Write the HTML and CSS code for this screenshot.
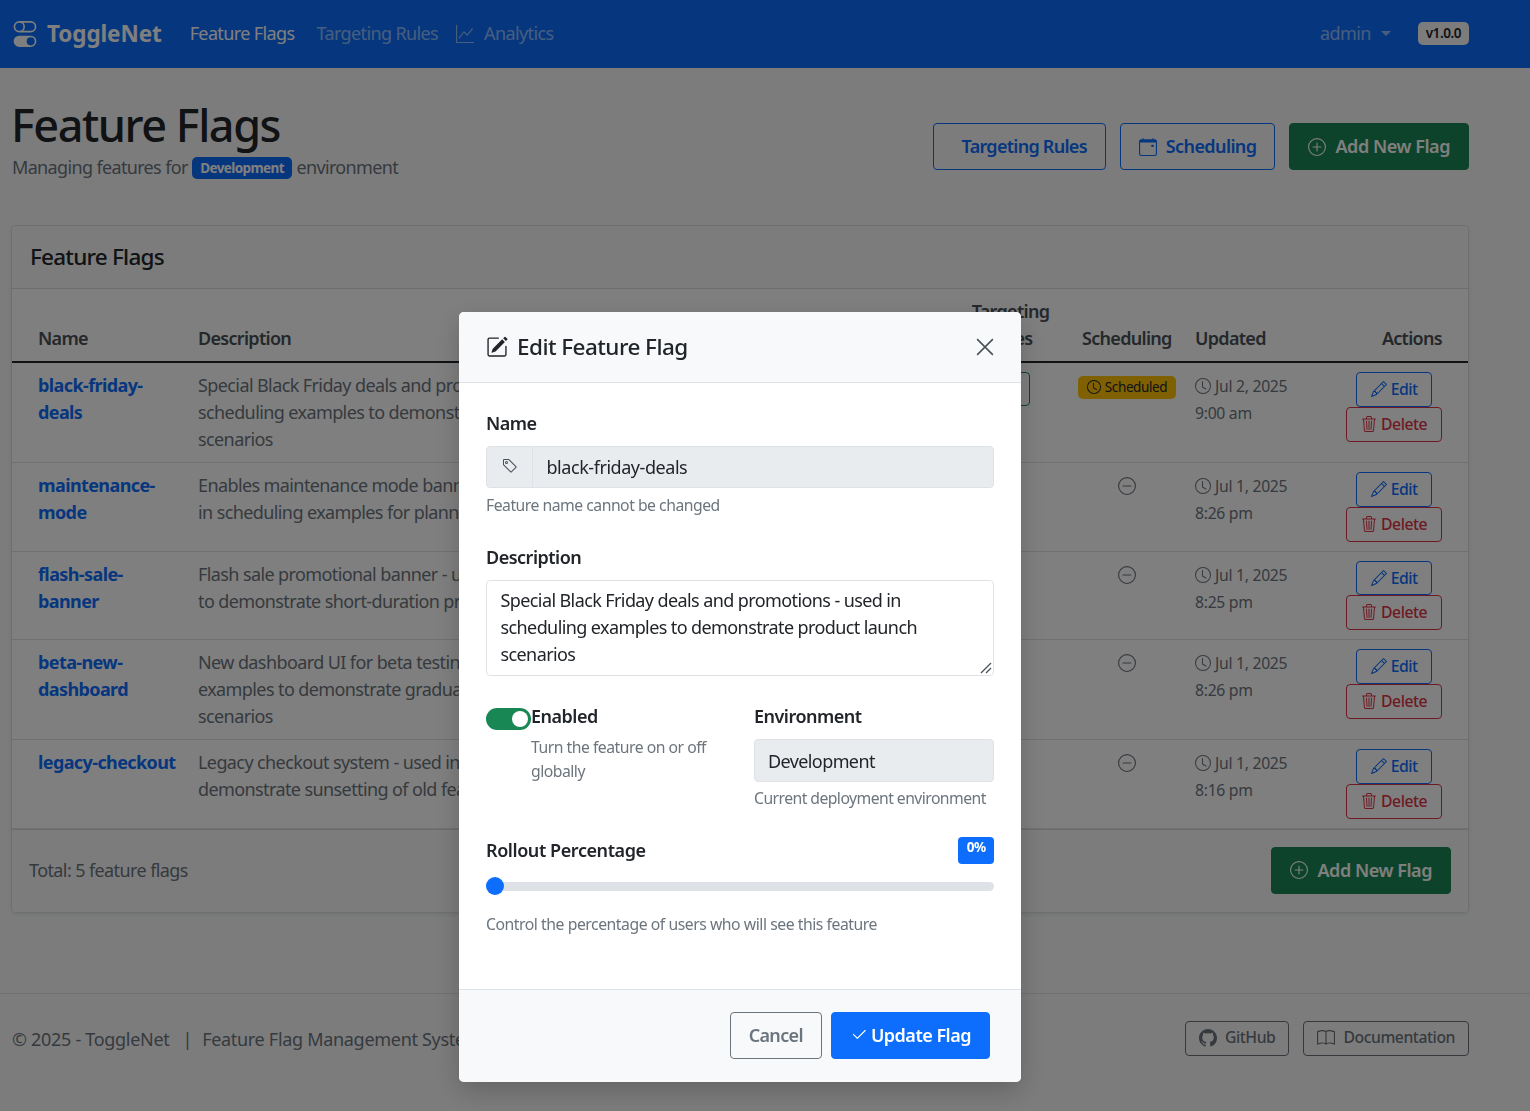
FILE: index.html
```html
<!DOCTYPE html>
<html lang="en">
<head>
<meta charset="utf-8">
<title>ToggleNet - Feature Flags</title>
<link rel="stylesheet" href="styles.css">
</head>
<body>
<svg class="sprite" xmlns="http://www.w3.org/2000/svg">
<symbol id="i-toggles" viewBox="0 0 16 16"><path d="M4.5 9a3.5 3.5 0 1 0 0 7h7a3.5 3.5 0 1 0 0-7h-7zm7 6a2.5 2.5 0 1 1 0-5 2.5 2.5 0 0 1 0 5zm-7-14a2.5 2.5 0 1 0 0 5 2.5 2.5 0 0 0 0-5zm2.45 0A3.49 3.49 0 0 1 8 3.5 3.49 3.49 0 0 1 6.95 6h4.55a2.5 2.5 0 0 0 0-5H6.95zM4.5 0h7a3.5 3.5 0 1 1 0 7h-7a3.5 3.5 0 1 1 0-7z"/></symbol>
<symbol id="i-graph" viewBox="0 0 16 16"><path d="M0 0h1v15h15v1H0V0Zm14.817 3.113a.5.5 0 0 1 .07.704l-4.5 5.5a.5.5 0 0 1-.74.037L7.06 6.767l-3.656 5.027a.5.5 0 0 1-.808-.588l4-5.5a.5.5 0 0 1 .758-.06l2.609 2.61 4.15-5.073a.5.5 0 0 1 .704-.07Z"/></symbol>
<symbol id="i-calendar" viewBox="0 0 16 16"><path d="M11 6.5a.5.5 0 0 1 .5-.5h1a.5.5 0 0 1 .5.5v1a.5.5 0 0 1-.5.5h-1a.5.5 0 0 1-.5-.5v-1z"/><path d="M3.5 0a.5.5 0 0 1 .5.5V1h8V.5a.5.5 0 0 1 1 0V1h1a2 2 0 0 1 2 2v11a2 2 0 0 1-2 2H2a2 2 0 0 1-2-2V3a2 2 0 0 1 2-2h1V.5a.5.5 0 0 1 .5-.5zM1 4v10a1 1 0 0 0 1 1h12a1 1 0 0 0 1-1V4H1z"/></symbol>
<symbol id="i-plus" viewBox="0 0 16 16"><path d="M8 15A7 7 0 1 1 8 1a7 7 0 0 1 0 14zm0 1A8 8 0 1 0 8 0a8 8 0 0 0 0 16z"/><path d="M8 4a.5.5 0 0 1 .5.5v3h3a.5.5 0 0 1 0 1h-3v3a.5.5 0 0 1-1 0v-3h-3a.5.5 0 0 1 0-1h3v-3A.5.5 0 0 1 8 4z"/></symbol>
<symbol id="i-clock" viewBox="0 0 16 16"><path d="M8 3.5a.5.5 0 0 0-1 0V9a.5.5 0 0 0 .252.434l3.5 2a.5.5 0 0 0 .496-.868L8 8.71V3.5z"/><path d="M8 16A8 8 0 1 0 8 0a8 8 0 0 0 0 16zm7-8A7 7 0 1 1 1 8a7 7 0 0 1 14 0z"/></symbol>
<symbol id="i-dash" viewBox="0 0 16 16"><path d="M8 15A7 7 0 1 1 8 1a7 7 0 0 1 0 14zm0 1A8 8 0 1 0 8 0a8 8 0 0 0 0 16z"/><path d="M4 8a.5.5 0 0 1 .5-.5h7a.5.5 0 0 1 0 1h-7A.5.5 0 0 1 4 8z"/></symbol>
<symbol id="i-pencil" viewBox="0 0 16 16"><path d="M12.146.146a.5.5 0 0 1 .708 0l3 3a.5.5 0 0 1 0 .708l-10 10a.5.5 0 0 1-.168.11l-5 2a.5.5 0 0 1-.65-.65l2-5a.5.5 0 0 1 .11-.168l10-10zM11.207 2.5 13.5 4.793 14.793 3.5 12.5 1.207 11.207 2.5zm1.586 3L10.5 3.207 4 9.707V10h.5a.5.5 0 0 1 .5.5v.5h.5a.5.5 0 0 1 .5.5v.5h.293l6.5-6.5zm-9.761 5.175-.106.106-1.528 3.821 3.821-1.528.106-.106A.5.5 0 0 1 5 12.5V12h-.5a.5.5 0 0 1-.5-.5V11h-.5a.5.5 0 0 1-.468-.325z"/></symbol>
<symbol id="i-trash" viewBox="0 0 16 16"><path d="M6.5 1h3a.5.5 0 0 1 .5.5v1H6v-1a.5.5 0 0 1 .5-.5ZM11 2.5v-1A1.5 1.5 0 0 0 9.5 0h-3A1.5 1.5 0 0 0 5 1.5v1H2.506a.58.58 0 0 0-.01 0H1.5a.5.5 0 0 0 0 1h.538l.853 10.66A2 2 0 0 0 4.885 16h6.23a2 2 0 0 0 1.994-1.84l.853-10.66h.538a.5.5 0 0 0 0-1h-.995a.59.59 0 0 0-.01 0H11Zm1.958 1-.846 10.58a1 1 0 0 1-.997.92h-6.23a1 1 0 0 1-.997-.92L3.042 3.5h9.916Zm-7.487 1a.5.5 0 0 1 .528.47l.5 8.5a.5.5 0 0 1-.998.06L5 5.03a.5.5 0 0 1 .47-.53Zm5.058 0a.5.5 0 0 1 .47.53l-.5 8.5a.5.5 0 1 1-.998-.06l.5-8.5a.5.5 0 0 1 .528-.47ZM8 4.5a.5.5 0 0 1 .5.5v8.5a.5.5 0 0 1-1 0V5a.5.5 0 0 1 .5-.5Z"/></symbol>
<symbol id="i-edit" viewBox="0 0 16 16"><path d="M15.502 1.94a.5.5 0 0 1 0 .706L14.459 3.69l-2-2L13.502.646a.5.5 0 0 1 .707 0l1.293 1.293zm-1.75 2.456-2-2L4.939 9.21a.5.5 0 0 0-.121.196l-.805 2.414a.25.25 0 0 0 .316.316l2.414-.805a.5.5 0 0 0 .196-.12l6.813-6.814z"/><path d="M1 13.5A1.5 1.5 0 0 0 2.5 15h11a1.5 1.5 0 0 0 1.5-1.5v-6a.5.5 0 0 0-1 0v6a.5.5 0 0 1-.5.5h-11a.5.5 0 0 1-.5-.5v-11a.5.5 0 0 1 .5-.5H9a.5.5 0 0 0 0-1H2.5A1.5 1.5 0 0 0 1 2.5v11z"/></symbol>
<symbol id="i-tag" viewBox="0 0 16 16"><path d="M6 4.5a1.5 1.5 0 1 1-3 0 1.5 1.5 0 0 1 3 0zm-1 0a.5.5 0 1 0-1 0 .5.5 0 0 0 1 0z"/><path d="M2 1h4.586a1 1 0 0 1 .707.293l7 7a1 1 0 0 1 0 1.414l-4.586 4.586a1 1 0 0 1-1.414 0l-7-7A1 1 0 0 1 1 6.586V2a1 1 0 0 1 1-1zm0 5.586 7 7L13.586 9l-7-7H2v4.586z"/></symbol>
<symbol id="i-check" viewBox="0 0 16 16"><path d="M13.854 3.646a.5.5 0 0 1 0 .708l-7 7a.5.5 0 0 1-.708 0l-3.5-3.5a.5.5 0 1 1 .708-.708L6.5 10.293l6.646-6.647a.5.5 0 0 1 .708 0z"/></symbol>
<symbol id="i-github" viewBox="0 0 16 16"><path d="M8 0C3.58 0 0 3.58 0 8c0 3.54 2.29 6.53 5.47 7.59.4.07.55-.17.55-.38 0-.19-.01-.82-.01-1.49-2.01.37-2.53-.49-2.69-.94-.09-.23-.48-.94-.82-1.13-.28-.15-.68-.52-.01-.53.63-.01 1.08.58 1.23.82.72 1.21 1.87.87 2.33.66.07-.52.28-.87.51-1.07-1.78-.2-3.64-.89-3.64-3.95 0-.87.31-1.59.82-2.15-.08-.2-.36-1.02.08-2.12 0 0 .67-.21 2.2.82.64-.18 1.32-.27 2-.27.68 0 1.36.09 2 .27 1.53-1.04 2.2-.82 2.2-.82.44 1.1.16 1.92.08 2.12.51.56.82 1.27.82 2.15 0 3.07-1.87 3.75-3.65 3.95.29.25.54.73.54 1.48 0 1.07-.01 1.93-.01 2.2 0 .21.15.46.55.38A8.012 8.012 0 0 0 16 8c0-4.42-3.58-8-8-8z"/></symbol>
<symbol id="i-book" viewBox="0 0 16 16"><path d="M1 2.828c.885-.37 2.154-.769 3.388-.893 1.33-.134 2.458.063 3.112.752v9.746c-.935-.53-2.12-.603-3.213-.493-1.18.12-2.37.461-3.287.811V2.828zm7.5-.141c.654-.689 1.782-.886 3.112-.752 1.234.124 2.503.523 3.388.893v9.923c-.918-.35-2.107-.692-3.287-.81-1.094-.111-2.278-.039-3.213.492V2.687zM8 1.783C7.015.936 5.587.81 4.287.94c-1.514.153-3.042.672-3.994 1.105A.5.5 0 0 0 0 2.5v11a.5.5 0 0 0 .707.455c.882-.4 2.303-.881 3.68-1.02 1.409-.142 2.59.087 3.223.877a.5.5 0 0 0 .78 0c.633-.79 1.814-1.019 3.222-.877 1.378.139 2.8.62 3.681 1.02A.5.5 0 0 0 16 13.5v-11a.5.5 0 0 0-.293-.455c-.952-.433-2.48-.952-3.994-1.105C10.413.809 8.985.936 8 1.783z"/></symbol>
</svg>

<nav class="navbar">
  <a class="brand"><svg class="brand-icon"><use href="#i-toggles"/></svg>ToggleNet</a>
  <a class="nav-link active">Feature Flags</a>
  <a class="nav-link">Targeting Rules</a>
  <a class="nav-link nav-analytics"><svg class="nav-icon"><use href="#i-graph"/></svg>Analytics</a>
  <span class="nav-spacer"></span>
  <a class="nav-link user">admin<span class="caret"></span></a>
  <span class="version">v1.0.0</span>
</nav>

<main class="main">
  <header class="page-head">
    <div>
      <h1 class="page-title">Feature Flags</h1>
      <p class="page-sub">Managing features for <span class="env-badge">Development</span> environment</p>
    </div>
    <div class="page-actions">
      <a class="btn btn-outline-primary btn-targeting">Targeting Rules</a>
      <a class="btn btn-outline-primary"><svg class="ico"><use href="#i-calendar"/></svg>Scheduling</a>
      <a class="btn btn-success"><svg class="ico"><use href="#i-plus"/></svg>Add New Flag</a>
    </div>
  </header>

  <section class="card">
    <h2 class="card-title">Feature Flags</h2>
    <table class="flags">
      <colgroup><col class="c-name"><col class="c-desc"><col class="c-status"><col class="c-rollout"><col class="c-target"><col class="c-sched"><col class="c-upd"><col class="c-act"></colgroup>
      <thead>
        <tr><th>Name</th><th>Description</th><th>Status</th><th>Rollout</th><th class="center">Targeting Rules</th><th>Scheduling</th><th>Updated</th><th class="right">Actions</th></tr>
      </thead>
      <tbody>
        <tr>
          <td><a class="flag-name">black-friday-deals</a></td>
          <td class="muted">Special Black Friday deals and promotions - used in scheduling examples to demonstrate product launch scenarios</td>
          <td></td><td></td>
          <td class="center"><span class="rule-pill">1</span></td>
          <td class="sched"><span class="sched-badge"><svg class="ico-xs"><use href="#i-clock"/></svg>Scheduled</span></td>
          <td class="muted date"><svg class="ico-sm"><use href="#i-clock"/></svg>Jul 2, 2025<br>9:00 am</td>
          <td class="right"><div class="actions"><a class="btn-sm edit"><svg class="ico-sm"><use href="#i-pencil"/></svg>Edit</a><a class="btn-sm delete"><svg class="ico-sm"><use href="#i-trash"/></svg>Delete</a></div></td>
        </tr>
        <tr>
          <td><a class="flag-name">maintenance-mode</a></td>
          <td class="muted">Enables maintenance mode banner - used<br>in scheduling examples for planned downtime</td>
          <td></td><td></td><td></td>
          <td class="sched muted"><svg class="ico-dash"><use href="#i-dash"/></svg></td>
          <td class="muted date"><svg class="ico-sm"><use href="#i-clock"/></svg>Jul 1, 2025<br>8:26 pm</td>
          <td class="right"><div class="actions"><a class="btn-sm edit"><svg class="ico-sm"><use href="#i-pencil"/></svg>Edit</a><a class="btn-sm delete"><svg class="ico-sm"><use href="#i-trash"/></svg>Delete</a></div></td>
        </tr>
        <tr>
          <td><a class="flag-name">flash-sale-banner</a></td>
          <td class="muted">Flash sale promotional banner - used in scheduling<br>to demonstrate short-duration promotions</td>
          <td></td><td></td><td></td>
          <td class="sched muted"><svg class="ico-dash"><use href="#i-dash"/></svg></td>
          <td class="muted date"><svg class="ico-sm"><use href="#i-clock"/></svg>Jul 1, 2025<br>8:25 pm</td>
          <td class="right"><div class="actions"><a class="btn-sm edit"><svg class="ico-sm"><use href="#i-pencil"/></svg>Edit</a><a class="btn-sm delete"><svg class="ico-sm"><use href="#i-trash"/></svg>Delete</a></div></td>
        </tr>
        <tr>
          <td><a class="flag-name">beta-new-dashboard</a></td>
          <td class="muted">New dashboard UI for beta testing - used in rollout examples to demonstrate gradual feature release scenarios</td>
          <td></td><td></td><td></td>
          <td class="sched muted"><svg class="ico-dash"><use href="#i-dash"/></svg></td>
          <td class="muted date"><svg class="ico-sm"><use href="#i-clock"/></svg>Jul 1, 2025<br>8:26 pm</td>
          <td class="right"><div class="actions"><a class="btn-sm edit"><svg class="ico-sm"><use href="#i-pencil"/></svg>Edit</a><a class="btn-sm delete"><svg class="ico-sm"><use href="#i-trash"/></svg>Delete</a></div></td>
        </tr>
        <tr>
          <td><a class="flag-name">legacy-checkout</a></td>
          <td class="muted">Legacy checkout system - used in scheduling to<br>demonstrate sunsetting of old features</td>
          <td></td><td></td><td></td>
          <td class="sched muted"><svg class="ico-dash"><use href="#i-dash"/></svg></td>
          <td class="muted date"><svg class="ico-sm"><use href="#i-clock"/></svg>Jul 1, 2025<br>8:16 pm</td>
          <td class="right"><div class="actions"><a class="btn-sm edit"><svg class="ico-sm"><use href="#i-pencil"/></svg>Edit</a><a class="btn-sm delete"><svg class="ico-sm"><use href="#i-trash"/></svg>Delete</a></div></td>
        </tr>
      </tbody>
    </table>
    <div class="card-foot">
      <span class="muted">Total: 5 feature flags</span>
      <a class="btn btn-success"><svg class="ico"><use href="#i-plus"/></svg>Add New Flag</a>
    </div>
  </section>
</main>

<footer class="site-foot">
  <span class="muted foot-text">© 2025 - ToggleNet<span class="foot-sep">|</span>Feature Flag Management System</span>
  <div class="foot-links">
    <a class="btn-foot"><svg class="ico-foot"><use href="#i-github"/></svg>GitHub</a>
    <a class="btn-foot"><svg class="ico-foot"><use href="#i-book"/></svg>Documentation</a>
  </div>
</footer>

<div class="backdrop"></div>
<div class="modal-wrap">
  <div class="modal">
    <div class="modal-head">
      <svg class="ico-title"><use href="#i-edit"/></svg>
      <h3 class="modal-title">Edit Feature Flag</h3>
      <svg class="close" viewBox="0 0 16 16"><path d="M1 1l14 14M15 1L1 15"/></svg>
    </div>
    <div class="modal-body">
      <label class="label">Name</label>
      <div class="input-group">
        <span class="addon"><svg class="ico-sm"><use href="#i-tag"/></svg></span>
        <span class="input-ro">black-friday-deals</span>
      </div>
      <p class="help">Feature name cannot be changed</p>

      <label class="label desc-label">Description</label>
      <div class="textarea">Special Black Friday deals and promotions - used in scheduling examples to demonstrate product launch scenarios
        <svg class="grip" viewBox="0 0 12 12"><path d="M11 1L1 11M11 6L6 11"/></svg>
      </div>

      <div class="two-col">
        <div class="switch-row">
          <span class="switch"><span class="knob"></span></span>
          <div>
            <div class="label switch-label">Enabled</div>
            <p class="help help-switch">Turn the feature on or off globally</p>
          </div>
        </div>
        <div>
          <label class="label">Environment</label>
          <div class="env-input">Development</div>
          <p class="help help-env">Current deployment environment</p>
        </div>
      </div>

      <div class="rollout-head">
        <label class="label rollout-label">Rollout Percentage</label>
        <span class="pct">0%</span>
      </div>
      <div class="range"><span class="thumb"></span></div>
      <p class="help range-help">Control the percentage of users who will see this feature</p>
    </div>
    <div class="modal-foot">
      <a class="btn btn-outline-secondary">Cancel</a>
      <a class="btn btn-primary"><svg class="ico-check"><use href="#i-check"/></svg>Update Flag</a>
    </div>
  </div>
</div>
</body>
</html>
```
FILE: styles.css
```css
* { box-sizing: border-box; }
html, body { margin: 0; height: 100%; }
body {
  font-family: "Noto Sans", "Open Sans", sans-serif;
  font-size: 18px;
  line-height: 1.5;
  letter-spacing: -0.6px;
  color: #212529;
  background: #f8f9fa;
  overflow: hidden;
}
.sprite { display: none; }
svg { fill: currentColor; flex: none; }
p, h1, h2, h3 { margin: 0; }
.muted { color: #6c757d; }

/* navbar */
.navbar {
  height: 68px;
  display: flex;
  align-items: center;
  gap: 22px;
  padding: 0 61px 1px 12px;
  background: #0d6efd;
}
.brand { display: flex; align-items: center; gap: 9px; color: #fff; font-size: 22.5px; font-weight: 700; letter-spacing: -0.1px; margin-right: 6px; }
.brand-icon { width: 26px; height: 26px; }
.nav-link { display: flex; align-items: center; gap: 10px; color: rgba(255,255,255,.55); letter-spacing: -0.62px; }
.nav-link.active { color: #fff; }
.nav-analytics { margin-left: -4px; }
.nav-icon { width: 18px; height: 18px; }
.nav-spacer { flex: 1; }
.user { margin-right: 5px; }
.caret { width: 0; height: 0; border-left: 5px solid transparent; border-right: 5px solid transparent; border-top: 5px solid currentColor; }
.version { background: #f8f9fa; color: #212529; font-size: 13.5px; font-weight: 600; border-radius: 5px; padding: 2px 8px; line-height: 19px; letter-spacing: -0.45px; }

/* page head */
.main { padding: 30px 61px 0 11px; }
.page-head { display: flex; justify-content: space-between; align-items: flex-start; height: 127px; }
.page-title { font-size: 45px; font-weight: 500; line-height: 54px; letter-spacing: -1.45px; }
.page-sub { color: #6c757d; line-height: 27px; margin-top: 2px; padding-left: 1px; letter-spacing: -0.65px; }
.env-badge { display: inline-block; background: #0d6efd; color: #fff; font-size: 13.5px; font-weight: 700; line-height: 14px; padding: 4px 8.5px; border-radius: 5px; vertical-align: 1px; letter-spacing: -0.6px; }
.page-actions { display: flex; gap: 14px; padding-top: 25px; }

/* buttons */
.btn { display: inline-flex; align-items: center; height: 47px; padding: 0 18px; border-radius: 4px; border: 1px solid transparent; font-weight: 600; white-space: nowrap; }
.btn-outline-primary { color: #0d6efd; border-color: #0d6efd; }
.btn-targeting { padding-left: 28px; letter-spacing: -0.73px; }
.btn-success { background: #198754; color: #fff; border-color: #198754; letter-spacing: -0.45px; }
.btn-primary { background: #0d6efd; color: #fff; border-color: #0d6efd; letter-spacing: -0.5px; }
.btn-outline-secondary { color: #6c757d; border-color: #6c757d; letter-spacing: -0.65px; }
.ico { width: 18px; height: 18px; margin-right: 9px; }
.ico-sm { width: 16px; height: 16px; margin-right: 4px; vertical-align: -2px; }
.ico-xs { width: 14px; height: 14px; margin-right: 4px; vertical-align: -2px; }
.ico-dash { width: 18px; height: 18px; margin-top: 5px; display: inline-block; }

/* card */
.card { background: #fff; border: 1px solid rgba(0,0,0,.125); border-radius: 5px; box-shadow: 0 2px 5px rgba(0,0,0,.08); overflow: hidden; }
.card-title { font-size: 22.5px; font-weight: 500; line-height: 27px; letter-spacing: -0.78px; padding: 17px 18px 18px; background: #f8f9fa; border-bottom: 1px solid rgba(0,0,0,.125); }
.flags { width: 100%; table-layout: fixed; border-collapse: collapse; }
.c-name { width: 177px; }
.c-desc { width: 440px; }
.c-status { width: 100px; }
.c-rollout { width: 219px; }
.c-target { width: 125px; }
.c-sched { width: 113px; }
.c-upd { width: 120px; }
.flags th, .flags td { padding: 9px; text-align: left; vertical-align: top; }
.flags th { vertical-align: bottom; font-weight: 600; color: #495057; border-bottom: 2px solid #212529; letter-spacing: -0.7px; }
.flags td { border-bottom: 1px solid #dee2e6; }
.flags th:first-child, .flags td:first-child { padding-left: 26px; }
.flags th:last-child, .flags td:last-child { padding-right: 26px; }
.flags th.right, .flags td.right { text-align: right; }
.flags th.center, .flags td.center { text-align: center; }
.flags td.sched { padding-right: 14px; text-align: center; }
.flags td.date { padding-top: 10px; }
.flag-name { color: #0d6efd; font-weight: 700; }
.rule-pill { display: inline-block; width: 39px; height: 34px; line-height: 32px; border: 1px solid #198754; border-radius: 4px; color: #198754; font-size: 15.75px; text-align: center; }
.sched-badge { display: inline-block; background: #ffc107; color: #212529; font-size: 13.5px; line-height: 15px; padding: 4px 9px; border-radius: 5px; white-space: nowrap; margin: 4px -9px 0; letter-spacing: -0.4px; }
.date { font-size: 15.75px; line-height: 27px; white-space: nowrap; letter-spacing: -0.3px; }
.actions { display: inline-flex; flex-direction: column; align-items: center; }
.btn-sm { display: block; font-size: 15.75px; font-weight: 500; line-height: 23.8px; padding: 5px 14px 4px; border: 1px solid; border-radius: 4px; white-space: nowrap; letter-spacing: -0.5px; }
.edit { color: #0d6efd; }
.delete { color: #dc3545; }
.card-foot { display: flex; justify-content: space-between; align-items: center; padding: 18px 17px; background: #f8f9fa; box-shadow: inset 0 1px rgba(0,0,0,.125); }

/* site footer */
.site-foot { display: flex; justify-content: space-between; align-items: center; margin-top: 80px; padding: 27px 61px 27px 12px; border-top: 1px solid #dee2e6; }
.foot-text { letter-spacing: -0.3px; padding-top: 2px; }
.foot-sep { margin: 0 10px 0 13px; }
.foot-links { display: flex; gap: 14px; }
.btn-foot { display: inline-flex; align-items: center; height: 35px; padding: 0 13px; border: 1px solid #6c757d; border-radius: 4px; color: #6c757d; font-size: 15.75px; font-weight: 500; letter-spacing: -0.45px; }
.ico-foot { width: 18px; height: 18px; margin-right: 8px; }

/* modal */
.backdrop { position: fixed; inset: 0; background: rgba(0,0,0,.5); }
.modal-wrap { position: fixed; inset: 0; padding: 312px 50px 0 0; display: flex; justify-content: center; align-items: flex-start; }
.modal { width: 562px; background: #fff; border-radius: 5px; box-shadow: 0 9px 27px rgba(0,0,0,.2); overflow: hidden; }
.modal-head { display: flex; align-items: center; height: 71px; padding: 0 27px 1px; background: #f8f9fa; border-bottom: 1px solid #dee2e6; }
.ico-title { width: 22px; height: 22px; margin-right: 9px; }
.modal-title { flex: 1; font-size: 22.5px; font-weight: 500; line-height: 27px; letter-spacing: -0.55px; }
.close { width: 18px; height: 18px; fill: none; stroke: #495057; stroke-width: 1.4; }
.modal-body { padding: 27px 27px 0; height: 606px; }
.label { display: block; font-weight: 600; line-height: 27px; margin-bottom: 9px; letter-spacing: -0.5px; }
.input-group { display: flex; height: 42px; background: #e9ecef; border: 1px solid #dee2e6; border-radius: 4px; }
.addon { width: 46px; display: flex; align-items: center; justify-content: center; border-right: 1px solid #dee2e6; color: #495057; }
.addon .ico-sm { margin: 0 0 3px; }
.input-ro { padding: 0 13.5px; line-height: 40px; letter-spacing: -0.45px; }
.help { font-size: 15.75px; line-height: 24px; color: #6c757d; margin-top: 5px; letter-spacing: -0.5px; }
.desc-label { margin-top: 27px; }
.textarea { position: relative; height: 96px; padding: 6.25px 13.5px; border: 1px solid #dee2e6; border-radius: 4px; }
.grip { position: absolute; right: 1px; bottom: 1px; width: 12px; height: 12px; fill: none; stroke: #495057; stroke-width: 1.3; }
.two-col { display: grid; grid-template-columns: 268px 240px; margin-top: 27px; }
.switch-row { display: flex; align-items: flex-start; padding-right: 18px; }
.switch { position: relative; flex: none; width: 45px; height: 22px; margin-top: 5px; background: #198754; border-radius: 11px; }
.knob { position: absolute; right: 3px; top: 3px; width: 16px; height: 16px; background: #fff; border-radius: 50%; }
.switch-label { margin-bottom: 0; }
.help-switch { margin-top: 6px; line-height: 23.6px; }
.env-input { height: 43px; line-height: 43px; padding: 0 13px; background: #e9ecef; border: 1px solid #dee2e6; border-radius: 4px; }
.help-env { margin-top: 4px; letter-spacing: -0.56px; }
.rollout-head { display: flex; justify-content: space-between; align-items: flex-start; margin-top: 26px; }
.rollout-label { margin: 1px 0 0; letter-spacing: -0.42px; }
.pct { background: #0d6efd; color: #fff; font-size: 13.5px; font-weight: 700; line-height: 14px; padding: 3px 8.5px 10px; border-radius: 4px; margin-top: 1px; }
.range { position: relative; height: 9px; margin-top: 18px; background: #dee2e6; border-radius: 5px; }
.thumb { position: absolute; left: 0; top: -5px; width: 18px; height: 18px; background: #0d6efd; border-radius: 50%; }
.range-help { margin-top: 21px; letter-spacing: -0.46px; }
.modal-foot { display: flex; justify-content: flex-end; align-items: center; gap: 9px; height: 93px; padding: 0 31px 2px 0; background: #f8f9fa; border-top: 1px solid #dee2e6; }
.ico-check { width: 18px; height: 18px; margin-right: 3px; }
```
